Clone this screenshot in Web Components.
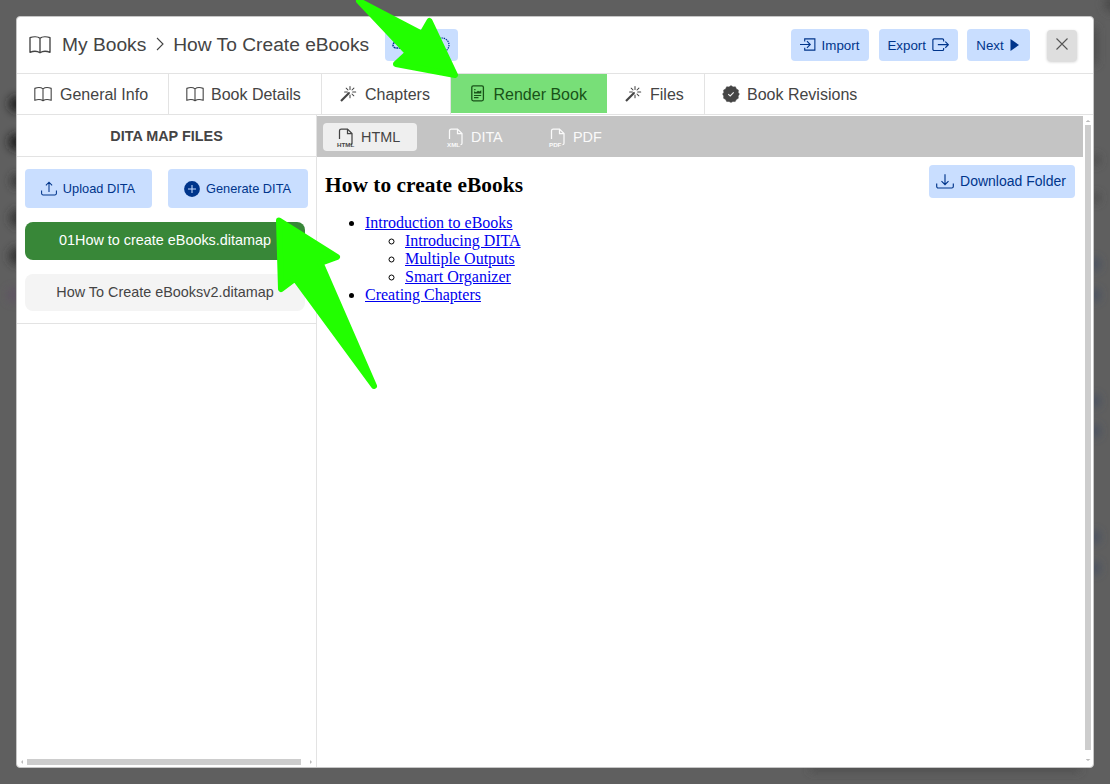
<!DOCTYPE html>
<html lang="en">
<head>
<meta charset="utf-8">
<title>My Books</title>
<style>
html, body { margin: 0; height: 100%; overflow: hidden; background: #5f5f5f; }
body { font-family: "Liberation Sans", Arial, sans-serif; color: #444; }
</style>
</head>
<body>
<book-app></book-app>
<script>
const ICONS = {
  book: ['0 0 22 18', '<path d="M11 2.3C8.8.6 4.2.5 1 1.7v14.6c3.2-1.2 7.8-1 10 .5 2.2-1.5 6.8-1.700 10-.5V1.7C17.800.5 13.200.6 11 2.300zM11 2.300v14.500" fill="none" stroke="currentColor" stroke-width="1.350" stroke-linejoin="round"/>'],
  chevron: ['0 0 8 14', '<path d="M1 1l6 6-6 6" fill="none" stroke="currentColor" stroke-width="1.1"/>'],
  wand: ['0 0 16 16', '<path d="M1 15l8-8" stroke="currentColor" stroke-width="2.200"/><path d="M8.200 7.800l1.400-1.400" stroke="currentColor" stroke-width="1.500"/><path d="M10 .5v3M10 9v2.800M4.600 6h2.800M12.700 6h3M6.200 2.200l1.800 1.800M12 8l1.800 1.800M12 4l1.900-1.900" stroke="currentColor" stroke-width="1.050" stroke-linecap="round" fill="none"/>'],
  page: ['0 0 14 17', '<rect x=".8" y=".8" width="11.6" height="15" rx="1.500" fill="none" stroke="currentColor" stroke-width="1.300"/><path d="M3 8.500V6.300l2 1 2-1.600 1.300.8 2-1.300v3.300zM3.200 4h1.300v1.200H3.200z" fill="currentColor"/><path d="M3 10.500h7.200M3 12.600h4.500" stroke="currentColor" stroke-width="1.200"/>'],
  badge: ['0 0 18 18', '<path d="M9 .6l2 1.300 2.400-.1 1 2.100 2 1.200-.2 2.400L17.400 9l-1.200 2 .1 2.300-2 1.200-1.100 2.100-2.300-.1L9 17.400l-2-.9-2.300.1-1.100-2.100-2-1.200.1-2.300L.6 9l1.200-1.500-.2-2.400 2-1.200 1-2.100 2.400.1z" fill="currentColor" stroke="currentColor" stroke-width=".5" stroke-linejoin="round"/><path d="M6.200 9.100l2 1.800 3.500-3.600" fill="none" stroke="#eee" stroke-width="1.100"/>'],
  import: ['0 0 17 14', '<path d="M5 3.600V.9h10.800v12H5v-2.500M0 6.900h10.500M7.400 3.400l3.500 3.500-3.500 3.500" fill="none" stroke="currentColor" stroke-width="1.200"/>'],
  export: ['0 0 18 14', '<path d="M12 3.600V2.200a1.300 1.300 0 0 0-1.300-1.300H2.200A1.300 1.300 0 0 0 .9 2.200v9.400a1.300 1.300 0 0 0 1.300 1.300h8.500a1.300 1.300 0 0 0 1.300-1.300v-1.400M6 6.900h10.600M13.700 3.800l3.100 3.100-3.100 3.100" fill="none" stroke="currentColor" stroke-width="1.200"/>'],
  play: ['0 0 10 12', '<path d="M.5 0L9 6 .5 12z" fill="currentColor"/>'],
  close: ['0 0 12 12', '<path d="M.5.5l11 11M11.500.5l-11 11" stroke="currentColor" stroke-width="1.100"/>'],
  upload: ['0 0 16 15', '<path d="M.6 9.600v3a1.300 1.300 0 0 0 1.300 1.300h12.200a1.300 1.300 0 0 0 1.300-1.300v-3M8 11V1.300M4.900 4.300L8 1.200l3.100 3.100" fill="none" stroke="currentColor" stroke-width="1.050"/>'],
  download: ['0 0 18 15', '<path d="M.7 9.600v2.900a1.500 1.500 0 0 0 1.500 1.500h13.600a1.500 1.500 0 0 0 1.500-1.500V9.600M9 .2v10.300M5.500 7.200L9 10.700l3.500-3.500" fill="none" stroke="currentColor" stroke-width="1.150"/>'],
  plus: ['0 0 16 16', '<circle cx="8" cy="8" r="7.900" fill="currentColor"/><path d="M8 4v8M4 8h8" stroke="#c9deff" stroke-width="1.050"/>'],
  link: ['0 0 14 10', '<path d="M8 2H4a3 3 0 0 0 0 6h4" fill="none" stroke="currentColor" stroke-width="1.500" stroke-dasharray="2 .7"/>'],
  dotted: ['0 0 16 16', '<circle cx="8" cy="8" r="7" fill="none" stroke="currentColor" stroke-width="1.200" stroke-dasharray="1.400 .9"/>'],
  file: ['0 0 18 19', '<path d="M2.500 11V2.800A1.800 1.800 0 0 1 4.300 1h6.200l4.500 4.600v9.600a1.500 1.500 0 0 1-1.500 1.500M10.500 1v4.600H15" fill="none" stroke="currentColor" stroke-width="1.250"/>']
};

function define(name, html, setup) {
  const t = document.createElement('template');
  t.innerHTML = html;
  customElements.define(name, class extends HTMLElement {
    constructor() {
      super();
      this.attachShadow({ mode: 'open' }).append(t.content.cloneNode(true));
    }
    connectedCallback() { if (setup) setup(this, this.shadowRoot); }
  });
}

define('ui-icon', `<style>:host{display:block;flex:none}svg{display:block;width:100%;height:100%;overflow:visible}</style><svg aria-hidden="true"></svg>`, (el, root) => {
  const [box, body] = ICONS[el.getAttribute('name')];
  const svg = root.querySelector('svg');
  svg.setAttribute('viewBox', box);
  svg.innerHTML = body;
  const [, , w, h] = box.split(' ').map(Number);
  const width = Number(el.getAttribute('size')) || w;
  el.style.width = width + 'px';
  el.style.height = (h * width / w) + 'px';
});

define('action-button', `<style>
:host{display:flex;box-sizing:border-box;align-items:center;justify-content:center;gap:7px;background:#c9deff;color:#00358b;border-radius:4px;white-space:nowrap;flex:none}
</style><slot></slot>`);

define('book-tab', `<style>
:host{display:flex;box-sizing:border-box;align-items:center;height:40px;padding-left:17px;border-right:1px solid #e3e3e3;font-size:16px;white-space:nowrap;flex:none}
:host([selected]){background:#78df78;color:#185218;height:39px;border-right:0}
:host([last]){border-right:0}
::slotted(span){padding-top:2px}
</style><slot></slot>`);

define('format-tab', `<style>
:host{display:flex;box-sizing:border-box;align-items:center;height:28px;width:94px;padding-left:14px;color:#fafafa;font-size:14.4px;border-radius:4px;flex:none}
:host([selected]){background:#efefef;color:#444}
.icon{display:grid;width:18px;height:19px;margin-right:6px}
ui-icon,.tag{grid-area:1/1}
.tag{align-self:end;font:bold 6.2px/5px "Liberation Sans",sans-serif}
.label{padding-bottom:1px}
</style><span class="icon"><ui-icon name="file"></ui-icon><span class="tag"></span></span><span class="label"><slot></slot></span>`, (el, root) => {
  root.querySelector('.tag').textContent = el.getAttribute('tag');
});

define('map-file', `<style>
:host{display:flex;box-sizing:border-box;align-items:center;justify-content:center;width:280px;height:37px;padding-bottom:2px;border-radius:8px;background:#f4f4f4;font-size:14.4px}
:host([selected]){background:#388738;color:#fff;height:38px}
</style><slot></slot>`);

define('dialog-header', `<style>
:host{display:flex;align-items:center;height:56px;padding:0 16px 0 12px;border-bottom:1px solid #e3e3e3}
.crumb{font-size:19.2px;white-space:nowrap}
.share{width:73px;height:32px;margin-left:16px;justify-content:space-between;padding:0 8px 0 7px}
.right{display:flex;margin-left:auto;font-size:13.33px}
.right action-button{height:32px}
.close{display:flex;align-items:center;justify-content:center;box-sizing:border-box;width:30px;height:31px;padding-bottom:3px;margin:1px 0 0 17px;background:#dedede;border-radius:4px;box-shadow:0 1px 3px #0003;color:#555}
</style>
<ui-icon name="book" style="margin-bottom:1px"></ui-icon>
<span class="crumb" style="margin-left:11px">My Books</span>
<ui-icon name="chevron" style="margin:0 9px 2px 10px"></ui-icon>
<span class="crumb">How To Create eBooks</span>
<action-button class="share"><ui-icon name="link"></ui-icon><ui-icon name="dotted"></ui-icon></action-button>
<div class="right">
<action-button style="width:78px;margin-right:10px;gap:6px;padding-right:1px"><ui-icon name="import" size="16"></ui-icon><span>Import</span></action-button>
<action-button style="width:79px;margin-right:9px;gap:6px"><span>Export</span><ui-icon name="export" size="17.500"></ui-icon></action-button>
<action-button style="width:63px;gap:6px;padding-right:1px"><span>Next</span><ui-icon name="play"></ui-icon></action-button>
<div class="close"><ui-icon name="close"></ui-icon></div>
</div>`);

define('tab-strip', `<style>:host{display:flex;height:40px;border-bottom:1px solid #e3e3e3}</style>
<book-tab style="width:152px"><ui-icon name="book" size="18"></ui-icon><span style="margin-left:8px">General Info</span></book-tab>
<book-tab style="width:153px"><ui-icon name="book" size="18"></ui-icon><span style="margin-left:7px">Book Details</span></book-tab>
<book-tab style="width:129px;padding-left:18px"><ui-icon name="wand"></ui-icon><span style="margin-left:9px">Chapters</span></book-tab>
<book-tab selected style="width:156px;padding-left:19.500px"><ui-icon name="page" size="14"></ui-icon><span style="margin-left:9px">Render Book</span></book-tab>
<book-tab style="width:98px;padding-left:18px"><ui-icon name="wand"></ui-icon><span style="margin-left:9px">Files</span></book-tab>
<book-tab last style="width:180px"><ui-icon name="badge"></ui-icon><span style="margin-left:7px">Book Revisions</span></book-tab>`);

define('map-panel', `<style>
:host{display:flex;flex-direction:column;box-sizing:border-box;width:300px;border-right:1px solid #e3e3e3;flex:none}
h2{margin:0;height:41px;line-height:42px;font-size:14.4px;text-align:center;border-bottom:1px solid #e3e3e3;flex:none}
.body{height:166px;box-sizing:content-box;border-bottom:1px solid #e3e3e3;padding-left:8px;flex:none}
.actions{display:flex;gap:16px;padding:12px 0 14px;font-size:12.8px}
.actions action-button{height:39px;padding-right:1px}
.bar{display:flex;align-items:center;margin-top:auto;height:10px;padding:0 4px}
.thumb{height:6px;width:274px;background:#cdcdcd;margin:0 9px 0 4px}
.l,.r{width:2px;height:4px;background:#bbb}
.l{clip-path:polygon(100% 0,100% 100%,0 50%)}.r{clip-path:polygon(0 0,0 100%,100% 50%)}
</style>
<h2>DITA MAP FILES</h2>
<div class="body">
<div class="actions">
<action-button style="width:127px;gap:6px"><ui-icon name="upload"></ui-icon><span>Upload DITA</span></action-button>
<action-button style="width:140px;gap:6px"><ui-icon name="plus"></ui-icon><span>Generate DITA</span></action-button>
</div>
<map-file selected style="margin-bottom:14px">01How to create eBooks.ditamap</map-file>
<map-file>How To Create eBooksv2.ditamap</map-file>
</div>
<div class="bar"><i class="l"></i><i class="thumb"></i><i class="r"></i></div>`);

define('book-preview', `<style>
:host{display:flex;flex:1;min-width:0}
.main{flex:1;min-width:0}
.formats{display:flex;gap:8px;height:41px;box-sizing:border-box;padding:7px 0 0 6px;background:#c4c4c4;margin-top:1px}
.doc{display:flex;justify-content:space-between;align-items:flex-start;padding:8px 8px 0}
.text{font:16px/18px "Liberation Serif","Times New Roman",serif;color:#000}
h1{font-size:21.4px;line-height:24px;margin:8px 0 17px;letter-spacing:.03px}
ul{margin:0;padding-left:40px}
a{color:#00e;text-decoration:underline}
.scroll{display:flex;flex-direction:column;align-items:center;width:10px;flex:none}
.thumb{width:6px;flex:1;background:#cdcdcd;margin:3px 0 9px}
.u,.d{width:5px;height:2px;background:#bbb}
.u{margin-top:5px;clip-path:polygon(0 100%,100% 100%,50% 0)}.d{margin-bottom:6px;clip-path:polygon(0 0,100% 0,50% 100%)}
</style>
<div class="main">
<div class="formats">
<format-tab selected tag="HTML">HTML</format-tab>
<format-tab tag="XML" style="margin-left:8px">DITA</format-tab>
<format-tab tag="PDF">PDF</format-tab>
</div>
<div class="doc">
<div class="text"><h1>How to create eBooks</h1>
<ul><li><a>Introduction to eBooks</a><ul><li><a>Introducing DITA</a></li><li><a>Multiple Outputs</a></li><li><a>Smart Organizer</a></li></ul></li><li><a>Creating Chapters</a></li></ul></div>
<action-button style="width:146px;height:33px;font-size:14px;gap:6px;padding:0 2px 1px 0"><ui-icon name="download"></ui-icon><span>Download Folder</span></action-button>
</div>
</div>
<div class="scroll"><i class="u"></i><i class="thumb"></i><i class="d"></i></div>`);

define('page-backdrop', `<style>:host{position:absolute;inset:0}svg{display:block}</style>
<svg width="1110" height="784"><defs><filter id="b" x="-200%" y="-200%" width="500%" height="500%"><feGaussianBlur stdDeviation="5"/></filter></defs>
<g filter="url(#b)"><g fill="#1c1c1c"><circle cx="17" cy="104" r="8"/><circle cx="17" cy="142" r="8.500"/></g>
<g fill="#303030"><circle cx="18" cy="181" r="7"/><circle cx="19" cy="218" r="9"/><circle cx="18" cy="256" r="9"/></g>
<circle cx="14" cy="295" r="7" fill="#5f5263"/>
<g fill="#454e62"><circle cx="1094" cy="264" r="6"/><circle cx="1094" cy="295" r="6"/><circle cx="1094" cy="401" r="6"/><circle cx="1094" cy="431" r="6"/><circle cx="1094" cy="537" r="6"/><circle cx="1094" cy="568" r="6"/></g>
<g fill="#4a4a4a"><circle cx="1095" cy="160" r="5"/><circle cx="1095" cy="198" r="5"/><circle cx="1112" cy="4" r="8"/><rect x="1088" y="28" width="9" height="36"/><rect x="810" y="765" width="270" height="6"/></g></g></svg>`);

define('pointer-arrows', `<style>:host{position:absolute;inset:0;pointer-events:none}svg{display:block}</style>
<svg width="1110" height="784" fill="#2f0" stroke="#2f0" stroke-width="6" stroke-linejoin="round">
<path d="M359 1L422 34L429.500 21L455 75L396 64L408 53z"/>
<path d="M279 220.500L337 257L320.500 263L374 386L295 278.500L281 289z"/></svg>`);

define('book-app', `<style>
:host{display:block;position:relative;width:1110px;height:784px;overflow:hidden;background:#5f5f5f}
.wrap{position:relative;padding:16px;box-sizing:border-box;height:784px}
.dialog{display:flex;flex-direction:column;box-sizing:border-box;width:1078px;height:752px;background:#fff;border:1px solid #c6c6c6;border-radius:4px;overflow:hidden}
.content{display:flex;flex:1;min-height:0}
</style>
<page-backdrop></page-backdrop>
<div class="wrap"><div class="dialog">
<dialog-header></dialog-header><tab-strip></tab-strip>
<div class="content"><map-panel></map-panel><book-preview></book-preview></div>
</div></div>
<pointer-arrows></pointer-arrows>`);
</script>
</body>
</html>
